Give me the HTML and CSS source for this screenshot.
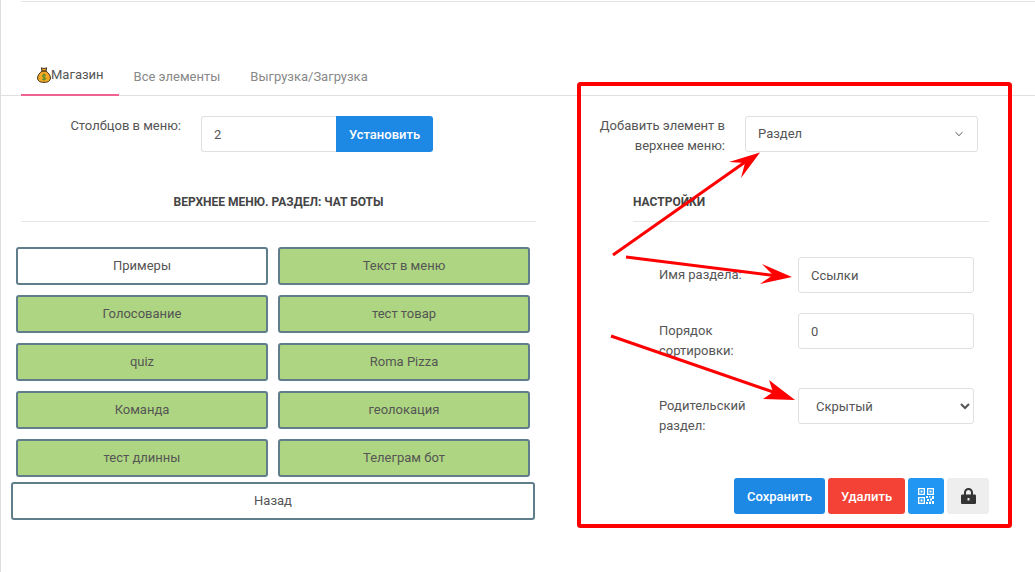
FILE: index.html
```html
<!DOCTYPE html>
<html lang="ru">
<head>
<meta charset="utf-8">
<title>Магазин</title>
<link rel="stylesheet" href="styles.css">
</head>
<body>
<div class="page">
  <div class="topline"></div>
  <nav class="tabs">
    <a class="tab tab-active">
      <svg class="bag" viewBox="0 0 14 16" width="14" height="16" aria-hidden="true">
        <path d="M4.300 .8 C5.500 1.600 8.500 1.600 9.700 .8 L9 4 L5 4 Z" fill="#f5a623" stroke="#3a3020" stroke-width="1"/>
        <path d="M5 4.200 C2.200 6 .6 8.500 .6 11 C.6 14 3 15.400 7 15.400 C11 15.400 13.400 14 13.400 11 C13.400 8.500 11.800 6 9 4.200 Z" fill="#f5a623" stroke="#3a3020" stroke-width="1"/>
        <path d="M5 4.200 H9" stroke="#7a5a10" stroke-width="1.200"/>
        <path d="M8.800 8.400 C8.200 7.600 5.500 7.500 5.500 9 C5.500 10.600 8.800 10 8.800 11.600 C8.800 13 5.900 12.900 5.200 12 M7 6.600 V13.600" fill="none" stroke="#3d8b2f" stroke-width="1"/>
      </svg><span>Магазин</span>
    </a>
    <a class="tab">Все элементы</a>
    <a class="tab">Выгрузка/Загрузка</a>
  </nav>
  <div class="columns">
    <section class="col-left">
      <div class="cols-row">
        <label class="cols-label">Столбцов в меню:</label>
        <div class="input-group">
          <input class="input group-input" value="2">
          <button class="btn btn-blue group-btn">Установить</button>
        </div>
      </div>
      <h3 class="heading heading-center">ВЕРХНЕЕ МЕНЮ. РАЗДЕЛ: ЧАТ БОТЫ</h3>
      <div class="menu-grid">
        <div class="menu-btn">Примеры</div>
        <div class="menu-btn menu-green">Текст в меню</div>
        <div class="menu-btn menu-green">Голосование</div>
        <div class="menu-btn menu-green">тест товар</div>
        <div class="menu-btn menu-green">quiz</div>
        <div class="menu-btn menu-green">Roma Pizza</div>
        <div class="menu-btn menu-green">Команда</div>
        <div class="menu-btn menu-green">геолокация</div>
        <div class="menu-btn menu-green">тест длинны</div>
        <div class="menu-btn menu-green">Телеграм бот</div>
      </div>
      <div class="menu-btn menu-back">Назад</div>
    </section>
    <section class="col-right">
      <div class="add-row">
        <label class="add-label">Добавить элемент в верхнее меню:</label>
        <div class="fake-select">
          <span>Раздел</span>
          <svg class="chev" viewBox="0 0 10 6" width="10" height="6" aria-hidden="true"><path d="M1.500 1.200 L5 4.600 L8.500 1.200" fill="none" stroke="#555" stroke-width="1"/></svg>
        </div>
      </div>
      <h3 class="heading heading-left">НАСТРОЙКИ</h3>
      <div class="field field-name">
        <label class="field-label label-name">Имя раздела:</label>
        <input class="input field-input" value="Ссылки">
      </div>
      <div class="field field-order">
        <label class="field-label">Порядок сортировки:</label>
        <input class="input field-input" value="0">
      </div>
      <div class="field">
        <label class="field-label">Родительский раздел:</label>
        <select class="input field-input native-select"><option>Скрытый</option></select>
      </div>
      <div class="actions">
        <button class="btn btn-blue btn-save">Сохранить</button>
        <button class="btn btn-red btn-delete">Удалить</button>
        <button class="btn btn-sky btn-icon" aria-label="QR">
          <svg viewBox="0 0 16 16" width="16" height="16" fill="#fff" aria-hidden="true">
            <path fill-rule="evenodd" d="M0 0h7v7H0zM1.300 1.300v4.400h4.400V1.300zM9 0h7v7H9zM10.300 1.300v4.400h4.400V1.300zM0 9h7v7H0zM1.300 10.300v4.400h4.400v-4.400z"/>
            <path d="M2.500 2.500h2v2h-2zM11.500 2.500h2v2h-2zM2.500 11.500h2v2h-2zM8 8h2v2H8zM11 8h1.500v1.500H11zM14 8h2v3h-2zM9 11h2v2H9zM12 10.500h2v2h-2zM8 14h2v2H8zM11 13.500h2V16h-2zM14 13h2v3h-2z"/>
          </svg>
        </button>
        <button class="btn btn-gray btn-lock" aria-label="Замок">
          <svg viewBox="0 0 15 16" width="15" height="16" aria-hidden="true">
            <path fill-rule="evenodd" fill="#333" d="M3 6.500V4.500C3 1.800 5 0 7.500 0S12 1.800 12 4.500v2h1.700c.7 0 1.300.6 1.300 1.300v6.900c0 .7-.6 1.300-1.300 1.300H1.300C.6 16 0 15.400 0 14.700V7.800C0 7.100.6 6.500 1.300 6.500zM5 6.500h5v-2C10 3 8.900 2 7.500 2S5 3 5 4.500zM6.500 10v2.500h2V10z"/>
          </svg>
        </button>
      </div>
    </section>
  </div>
  <svg class="annotation" width="1035" height="572" viewBox="0 0 1035 572" aria-hidden="true">
    <rect x="579" y="84" width="431" height="442" rx="1.500" fill="none" stroke="#f00" stroke-width="4"/>
    <path d="M613 255 L748 160" stroke="#f00" stroke-width="3" fill="none"/>
    <polygon points="760,152.500 729,162 745,163 741,178" fill="#f00"/>
    <path d="M626 257 L778 276" stroke="#f00" stroke-width="3" fill="none"/>
    <polygon points="792,277 762,264 773,275 760,284" fill="#f00"/>
    <path d="M611 336 L782 395" stroke="#f00" stroke-width="3" fill="none"/>
    <polygon points="795,400 769,380 773,392 763,399" fill="#f00"/>
  </svg>
</div>
</body>
</html>
```
FILE: styles.css
```css
* { box-sizing: border-box; }
html, body { margin: 0; padding: 0; background: #fff; }
body {
  font-family: Roboto, "Liberation Sans", sans-serif;
  font-size: 13px;
  line-height: 20px;
  color: #555;
}
.page {
  position: relative;
  width: 1035px;
  height: 572px;
  overflow: hidden;
  border-left: 1px solid #ddd;
  padding-top: 1px;
}
.topline { height: 1px; margin-left: 20px; background: #e4e4e4; }
.tabs {
  display: flex;
  height: 40px;
  margin-top: 54px;
  padding-left: 20px;
  border-bottom: 1px solid #e0e0e0;
}
.tab {
  display: flex;
  align-items: center;
  height: 40px;
  padding: 2px 15px 0;
  color: #888;
}
.tab-active {
  padding: 0 15px 0 16px;
  color: #555;
  border-bottom: 2px solid #f06292;
}
.bag { display: block; flex: none; }
.columns { display: flex; }
.col-left { width: 576px; flex: none; }
.col-right { width: 458px; flex: none; }
.cols-row { display: flex; padding-top: 20px; }
.cols-label { width: 180px; text-align: right; }
.input-group { display: flex; margin-left: 20px; }
.input {
  height: 36px;
  padding: 0 12px;
  border: 1px solid #e0e0e0;
  border-radius: 3px;
  background: #fff;
  font: 13px Roboto, "Liberation Sans", sans-serif;
  color: #555;
  outline: none;
}
.group-input { width: 135px; border-right: 0; border-radius: 3px 0 0 3px; }
.btn {
  height: 36px;
  padding: 0;
  border: 0;
  border-radius: 3px;
  font: 500 13px Roboto, "Liberation Sans", sans-serif;
  color: #fff;
  display: flex;
  align-items: center;
  justify-content: center;
}
.btn-blue { background: #1e88e5; }
.btn-red { background: #f44336; }
.btn-sky { background: #2196f3; }
.btn-gray { background: #eee; }
.group-btn { width: 97px; border-radius: 0 3px 3px 0; }
.heading {
  margin: 0;
  height: 30px;
  padding-bottom: 9px;
  border-bottom: 1px solid #e6e6e6;
  font-size: 12px;
  font-weight: 700;
  line-height: 20px;
  color: #444;
}
.heading-center { width: 515px; margin: 40px 0 0 20px; text-align: center; }
.heading-left { width: 356px; margin: 36px 0 0 56px; }
.menu-grid {
  display: grid;
  grid-template-columns: 252px 252px;
  grid-auto-rows: 38px;
  gap: 10px;
  margin: 25px 0 0 15px;
}
.menu-btn {
  display: flex;
  align-items: center;
  justify-content: center;
  height: 38px;
  border: 2px solid #607d8b;
  border-radius: 3px;
  background: #fff;
}
.menu-green { background: #aed581; }
.menu-back { width: 524px; margin: 5px 0 0 10px; }
.add-row { display: flex; padding-top: 20px; }
.add-label { width: 148px; text-align: right; }
.fake-select {
  display: flex;
  align-items: center;
  justify-content: space-between;
  width: 233px;
  height: 36px;
  margin-left: 20px;
  padding: 0 13px 0 12px;
  border: 1px solid #e0e0e0;
  border-radius: 3px;
}
.field { display: flex; align-items: flex-start; margin-left: 82px; }
.field-name { margin-top: 35px; height: 56px; }
.field-order { height: 75px; }
.field-label { width: 139px; padding: 8px 40px 0 0; }
.label-name { padding-right: 0; }
.field-input { width: 176px; }
.native-select { padding: 0 0 0 13px; }
.actions { display: flex; gap: 3px; margin: 42px 0 0 157px; }
.btn-save { width: 91px; }
.btn-delete { width: 77px; }
.btn-icon { width: 36px; }
.btn-lock { width: 42px; }
.annotation { position: absolute; left: -1px; top: 0; pointer-events: none; }
```
